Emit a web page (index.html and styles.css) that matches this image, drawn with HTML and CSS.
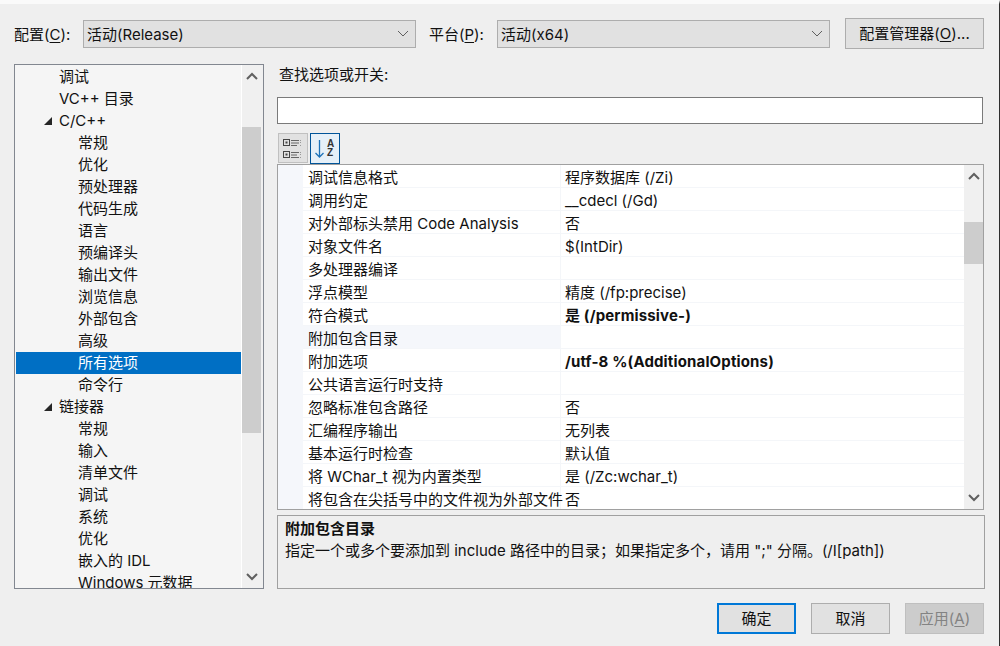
FILE: index.html
```html
<!DOCTYPE html>
<html lang="zh-CN">
<head>
<meta charset="utf-8">
<title>属性页</title>
<link rel="stylesheet" href="styles.css">
</head>
<body>
<div class="dialog">
  <header class="topbar">
    <label class="top-label">配置(<u>C</u>):</label>
    <div class="combo combo-config"><span>活动(Release)</span><svg class="chev" width="12" height="7" viewBox="0 0 12 7"><path d="M1 1l5 5 5-5" fill="none" stroke="#5f5f5f" stroke-width="1"/></svg></div>
    <label class="top-label label-platform">平台(<u>P</u>):</label>
    <div class="combo combo-platform"><span>活动(x64)</span><svg class="chev" width="12" height="7" viewBox="0 0 12 7"><path d="M1 1l5 5 5-5" fill="none" stroke="#5f5f5f" stroke-width="1"/></svg></div>
    <button class="btn btn-manager">配置管理器(<u>O</u>)...</button>
  </header>
  <main class="content">
    <nav class="tree">
      <div class="tree-list">
        <div class="node l1">调试</div>
        <div class="node l1">VC++ 目录</div>
        <div class="node l1"><i class="arrow"></i>C/C++</div>
        <div class="node l2">常规</div>
        <div class="node l2">优化</div>
        <div class="node l2">预处理器</div>
        <div class="node l2">代码生成</div>
        <div class="node l2">语言</div>
        <div class="node l2">预编译头</div>
        <div class="node l2">输出文件</div>
        <div class="node l2">浏览信息</div>
        <div class="node l2">外部包含</div>
        <div class="node l2">高级</div>
        <div class="node l2 selected">所有选项</div>
        <div class="node l2">命令行</div>
        <div class="node l1"><i class="arrow"></i>链接器</div>
        <div class="node l2">常规</div>
        <div class="node l2">输入</div>
        <div class="node l2">清单文件</div>
        <div class="node l2">调试</div>
        <div class="node l2">系统</div>
        <div class="node l2">优化</div>
        <div class="node l2">嵌入的 IDL</div>
        <div class="node l2">Windows 元数据</div>
      </div>
      <div class="vscroll tree-scroll">
        <svg class="sb-arrow" width="14" height="9" viewBox="0 0 14 9"><path d="M2 7l5-5 5 5" fill="none" stroke="#606060" stroke-width="2"/></svg>
        <div class="sb-track"><div class="sb-thumb tree-thumb"></div></div>
        <svg class="sb-arrow" width="14" height="9" viewBox="0 0 14 9"><path d="M2 2l5 5 5-5" fill="none" stroke="#606060" stroke-width="2"/></svg>
      </div>
    </nav>
    <section class="panel">
      <div class="search-label">查找选项或开关:</div>
      <input class="search" type="text">
      <div class="toolbar">
        <div class="tool tool-cat">
          <svg width="22" height="20" viewBox="0 -1 22 20"><g fill="none" stroke="#444"><rect x="1.500" y="0.500" width="6" height="6"/><rect x="1.500" y="12.500" width="6" height="6"/></g><rect x="3.500" y="2.500" width="2" height="2" fill="#444"/><rect x="3.500" y="14.500" width="2" height="2" fill="#444"/><g stroke="#666"><path d="M9 1.500h8M9 4h8M9 6.500h6M9 13.500h8M9 16h6M9 18.500h8"/></g><g fill="#999"><rect x="18" y="1" width="1" height="1"/><rect x="18" y="3" width="1" height="1"/><rect x="18" y="6" width="1" height="1"/><rect x="18" y="13" width="1" height="1"/><rect x="18" y="15" width="1" height="1"/><rect x="18" y="18" width="1" height="1"/></g></svg>
        </div>
        <div class="tool tool-az">
          <svg width="24" height="25" viewBox="0 0 24 25"><path d="M6.500 4v17M2.500 17l4 4 4-4" fill="none" stroke="#1c72b8" stroke-width="1.300"/><text x="14" y="11" class="az">A</text><text x="14" y="20" class="az">Z</text></svg>
        </div>
      </div>
      <div class="grid">
        <div class="rows">
          <div class="row"><div class="gutter"></div><div class="name">调试信息格式</div><div class="value">程序数据库 (/Zi)</div></div>
          <div class="row"><div class="gutter"></div><div class="name">调用约定</div><div class="value">__cdecl (/Gd)</div></div>
          <div class="row"><div class="gutter"></div><div class="name">对外部标头禁用 Code Analysis</div><div class="value">否</div></div>
          <div class="row"><div class="gutter"></div><div class="name">对象文件名</div><div class="value">$(IntDir)</div></div>
          <div class="row"><div class="gutter"></div><div class="name">多处理器编译</div><div class="value"></div></div>
          <div class="row"><div class="gutter"></div><div class="name">浮点模型</div><div class="value">精度 (/fp:precise)</div></div>
          <div class="row"><div class="gutter"></div><div class="name">符合模式</div><div class="value strong">是 (/permissive-)</div></div>
          <div class="row row-current"><div class="gutter"></div><div class="name">附加包含目录</div><div class="value"></div></div>
          <div class="row"><div class="gutter"></div><div class="name">附加选项</div><div class="value strong">/utf-8 %(AdditionalOptions)</div></div>
          <div class="row"><div class="gutter"></div><div class="name">公共语言运行时支持</div><div class="value"></div></div>
          <div class="row"><div class="gutter"></div><div class="name">忽略标准包含路径</div><div class="value">否</div></div>
          <div class="row"><div class="gutter"></div><div class="name">汇编程序输出</div><div class="value">无列表</div></div>
          <div class="row"><div class="gutter"></div><div class="name">基本运行时检查</div><div class="value">默认值</div></div>
          <div class="row"><div class="gutter"></div><div class="name">将 WChar_t 视为内置类型</div><div class="value">是 (/Zc:wchar_t)</div></div>
          <div class="row"><div class="gutter"></div><div class="name">将包含在尖括号中的文件视为外部文件</div><div class="value">否</div></div>
        </div>
        <div class="vscroll grid-scroll">
          <svg class="sb-arrow" width="14" height="9" viewBox="0 0 14 9"><path d="M2 7l5-5 5 5" fill="none" stroke="#606060" stroke-width="2"/></svg>
          <div class="sb-track"><div class="sb-thumb grid-thumb"></div></div>
          <svg class="sb-arrow" width="14" height="9" viewBox="0 0 14 9"><path d="M2 2l5 5 5-5" fill="none" stroke="#606060" stroke-width="2"/></svg>
        </div>
      </div>
      <div class="desc">
        <div class="desc-title">附加包含目录</div>
        <div class="desc-text">指定一个或多个要添加到 include 路径中的目录；如果指定多个，请用 ";" 分隔。(/I[path])</div>
      </div>
    </section>
  </main>
  <footer class="actions">
    <button class="btn btn-primary">确定</button>
    <button class="btn">取消</button>
    <button class="btn btn-disabled">应用(<u>A</u>)</button>
  </footer>
</div>
</body>
</html>
```

FILE: styles.css
```css
html, body {
  margin: 0;
  height: 100%;
  overflow: hidden;
}
body {
  background: #efefef;
  color: #111;
  font: 15px/22px "Inter", "Noto Sans CJK SC", sans-serif;
}
.dialog {
  height: 646px;
  box-sizing: border-box;
  border-top: 4px solid #fafafa;
  border-right: 1px solid #2e2e2e;
  padding: 14px 15px 0 14px;
  display: flex;
  flex-direction: column;
}
.topbar {
  display: flex;
  align-items: center;
  height: 31px;
}
.top-label { width: 69px; flex: none; white-space: nowrap; position: relative; top: 1px; }
.label-platform { margin-left: 13px; width: 68px; }
.combo {
  flex: none;
  width: 333px;
  height: 28px;
  box-sizing: border-box;
  border: 1px solid #adadad;
  background: #e1e1e1;
  display: flex;
  align-items: center;
  justify-content: space-between;
  padding: 2px 6px 0 3px;
}
.chev { margin-top: -2px; }
.btn {
  width: 79px;
  height: 31px;
  box-sizing: border-box;
  border: 1px solid #adadad;
  background: #e1e1e1;
  color: #111;
  font: inherit;
  padding: 0;
  white-space: nowrap;
}
.btn-manager { width: 139px; margin-left: 15px; }
.btn-primary { border: 2px solid #0078d7; }
.btn-disabled { background: #cccccc; border-color: #bfbfbf; color: #838383; }
.content {
  display: flex;
  margin-top: 15px;
  height: 525px;
}
.tree {
  width: 250px;
  box-sizing: border-box;
  border: 1px solid #828790;
  background: #f5f5f5;
  display: flex;
  flex: none;
  overflow: hidden;
}
.tree-list {
  width: 226px;
  flex: none;
  padding-top: 1px;
  overflow: hidden;
  border-right: 1px solid #fff;
  box-sizing: content-box;
}
.node {
  height: 22px;
  line-height: 22px;
  white-space: nowrap;
  position: relative;
  margin-left: 1px;
}
.l1 { padding-left: 43px; }
.l2 { padding-left: 62px; }
.selected { background: #006fc4; color: #fff; }
.arrow {
  position: absolute;
  left: 28px;
  top: 7px;
  width: 0;
  height: 0;
  border-style: solid;
  border-width: 0 0 8px 8px;
  border-color: transparent transparent #262626 transparent;
}
.vscroll {
  display: flex;
  flex-direction: column;
  align-items: center;
  background: #f0f0f0;
  box-sizing: border-box;
}
.tree-scroll {
  width: 21px;
  padding: 7px 2px 7px 0;
}
.sb-arrow { flex: none; }
.sb-track {
  flex: 1;
  width: 100%;
  min-height: 0;
  display: flex;
  flex-direction: column;
}
.sb-thumb { background: #cdcdcd; width: 100%; }
.tree-thumb { height: 306px; margin-top: 46px; }
.panel {
  flex: 1;
  margin-left: 13px;
  display: flex;
  flex-direction: column;
  min-width: 0;
}
.search-label { padding-left: 2px; height: 33px; line-height: 22px; }
.search {
  display: block;
  width: 706px;
  height: 27px;
  box-sizing: border-box;
  border: 1px solid #7a7a7a;
  background: #fff;
  margin: 0;
  padding: 0;
}
.toolbar {
  display: flex;
  gap: 2px;
  margin-top: 9px;
  margin-left: 1px;
  height: 31px;
  align-items: flex-start;
}
.tool {
  width: 30px;
  height: 30px;
  box-sizing: border-box;
  display: flex;
  align-items: center;
  justify-content: center;
}
.tool-cat { background: #e1e1e1; border: 1px solid #c0c0c0; }
.tool-az { background: #e6f0f8; border: 1px solid #005499; height: 31px; }
.az { font: bold 10px "Liberation Sans", sans-serif; fill: #333; }
.grid {
  width: 707px;
  height: 347px;
  box-sizing: border-box;
  border: 1px solid #a0a0a0;
  background: #fff;
  display: flex;
  overflow: hidden;
}
.rows { width: 686px; flex: none; }
.row {
  display: flex;
  height: 23px;
  box-sizing: border-box;
  border-bottom: 1px solid #f4f6f9;
  line-height: 25px;
}
.gutter { width: 25px; flex: none; background: #f5f7fb; margin-bottom: -1px; }
.name {
  width: 258px;
  flex: none;
  box-sizing: border-box;
  padding-left: 5px;
  border-right: 1px solid #f4f6f9;
  white-space: nowrap;
}
.row-current .name { background: #f5f7fb; }
.value { flex: 1; padding-left: 4px; white-space: nowrap; }
.strong { font-weight: 700; letter-spacing: 0.15px; }
.grid-scroll {
  width: 19px;
  padding-top: 7px;
  padding-bottom: 7px;
}
.grid-thumb { height: 42px; margin-top: 41px; }
.desc {
  width: 708px;
  height: 74px;
  box-sizing: border-box;
  margin-top: 5px;
  border: 1px solid #a0a0a0;
  padding: 2px 7px;
}
.desc-title { font-weight: 700; }
.actions {
  display: flex;
  justify-content: flex-end;
  gap: 15px;
  margin-top: 14px;
}
u { text-underline-offset: 2px; }
```
